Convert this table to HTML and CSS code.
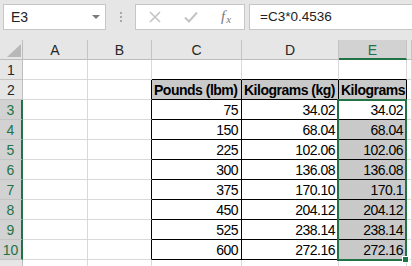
FILE: index.html
```html
<!DOCTYPE html>
<html>
<head>
<meta charset="utf-8">
<link rel="stylesheet" href="styles.css">
</head>
<body>
<div class="bar">
  <div class="namebox"><span class="nb-text">E3</span><svg class="nb-arrow" width="8" height="4" viewBox="0 0 8 4"><path d="M0 0H8L4 4Z" fill="#7a7a7a"/></svg></div>
  <div class="dots"><i></i><i></i><i></i></div>
  <div class="btns">
    <svg class="ico" width="12" height="12" viewBox="0 0 12 12"><path d="M1 1L11 11M11 1L1 11" stroke="#c4c4c4" stroke-width="1.6"/></svg>
    <svg class="ico" width="14" height="12" viewBox="0 0 14 12"><path d="M1 6.5L5 10.5L13 1.5" stroke="#c4c4c4" stroke-width="2" fill="none"/></svg>
    <span class="fx">f<span class="fx-x">x</span></span>
  </div>
  <div class="formula">=C3*0.4536</div>
</div>
<div class="sheet">
  <div class="c corner"><svg width="14" height="13" viewBox="0 0 14 13"><path d="M14 0V13H0Z" fill="#b8b8b8"/></svg></div>
  <div class="c h">A</div><div class="c h">B</div><div class="c h">C</div><div class="c h">D</div><div class="c h hsel">E</div><div class="c h"></div>

  <div class="c rh">1</div><div class="c"></div><div class="c"></div><div class="c tt"></div><div class="c tt"></div><div class="c tt"></div><div class="c"></div>

  <div class="c rh">2</div><div class="c"></div><div class="c bl"></div><div class="c tb th">Pounds (lbm)</div><div class="c tb th">Kilograms (kg)</div><div class="c tb th">Kilograms</div><div class="c"></div>

  <div class="c rh rsel">3</div><div class="c"></div><div class="c bl"></div><div class="c tb num">75</div><div class="c tb num">34.02</div><div class="c tb num">34.02</div><div class="c"></div>
  <div class="c rh rsel">4</div><div class="c"></div><div class="c bl"></div><div class="c tb num">150</div><div class="c tb num">68.04</div><div class="c tb num shade">68.04</div><div class="c"></div>
  <div class="c rh rsel">5</div><div class="c"></div><div class="c bl"></div><div class="c tb num">225</div><div class="c tb num">102.06</div><div class="c tb num shade">102.06</div><div class="c"></div>
  <div class="c rh rsel">6</div><div class="c"></div><div class="c bl"></div><div class="c tb num">300</div><div class="c tb num">136.08</div><div class="c tb num shade">136.08</div><div class="c"></div>
  <div class="c rh rsel">7</div><div class="c"></div><div class="c bl"></div><div class="c tb num">375</div><div class="c tb num">170.10</div><div class="c tb num shade">170.1</div><div class="c"></div>
  <div class="c rh rsel">8</div><div class="c"></div><div class="c bl"></div><div class="c tb num">450</div><div class="c tb num">204.12</div><div class="c tb num shade">204.12</div><div class="c"></div>
  <div class="c rh rsel">9</div><div class="c"></div><div class="c bl"></div><div class="c tb num">525</div><div class="c tb num">238.14</div><div class="c tb num shade">238.14</div><div class="c"></div>
  <div class="c rh rsel">10</div><div class="c"></div><div class="c bl"></div><div class="c tb num">600</div><div class="c tb num">272.16</div><div class="c tb num shade">272.16</div><div class="c"></div>

  <div class="c rh last"></div><div class="c last"></div><div class="c last"></div><div class="c last"></div><div class="c last"></div><div class="c last"></div><div class="c last"></div>

  <div class="selection"></div>
  <div class="handle"></div>
</div>
</body>
</html>
```

FILE: styles.css
```css
html, body {
  margin: 0;
  padding: 0;
}
body {
  width: 412px;
  height: 266px;
  overflow: hidden;
  background: #e6e6e6;
  font-family: "Liberation Sans", Arial, sans-serif;
}
.bar {
  height: 40px;
  display: flex;
  align-items: flex-start;
  padding-top: 4px;
  box-sizing: border-box;
  background: #e6e6e6;
}
.namebox {
  margin-left: 3px;
  width: 103px;
  height: 26px;
  box-sizing: border-box;
  background: #fff;
  border: 1px solid #c6c6c6;
  display: flex;
  align-items: center;
  justify-content: space-between;
  padding: 0 5px 0 7px;
  font-size: 14px;
  color: #222;
}
.nb-arrow {
  margin-top: -1px;
}
.dots {
  width: 29px;
  height: 26px;
  display: flex;
  flex-direction: column;
  align-items: center;
  justify-content: center;
  gap: 2px;
}
.dots i {
  display: block;
  width: 2px;
  height: 2px;
  background: #a8a8a8;
}
.btns {
  width: 110px;
  height: 26px;
  box-sizing: border-box;
  background: #fff;
  border: 1px solid #c6c6c6;
  display: flex;
  align-items: center;
  padding-left: 13px;
}
.btns .ico:nth-child(1) {
  margin-right: 23px;
}
.btns .ico:nth-child(2) {
  margin-right: 23px;
}
.fx {
  font-family: "Liberation Serif", "Times New Roman", serif;
  font-style: italic;
  font-size: 15px;
  color: #7a7a7a;
  margin-top: -2px;
}
.fx-x {
  font-size: 11px;
  position: relative;
  top: 2px;
  margin-left: 1px;
}
.formula {
  flex: 1;
  margin-left: 4px;
  margin-right: -2px;
  height: 26px;
  box-sizing: border-box;
  background: #fff;
  border: 1px solid #c6c6c6;
  padding-left: 10px;
  font-size: 13.5px;
  line-height: 24px;
  color: #222;
}
.sheet {
  position: relative;
  display: grid;
  grid-template-columns: 23px 65px 64px 90px 97px 68px 1fr;
  grid-template-rows: repeat(11, 20px) 6px;
  background: #fff;
}
.c {
  box-sizing: border-box;
  border-right: 1px solid #d9d9d9;
  border-bottom: 1px solid #d9d9d9;
  font-size: 14px;
  letter-spacing: -0.5px;
  color: #000;
  white-space: nowrap;
  overflow: hidden;
  display: flex;
  align-items: flex-end;
  padding-bottom: 1px;
}
.c.last {
  border-bottom: 0;
  padding: 0;
}
.corner {
  background: #e6e6e6;
  border-right-color: #bdbdbd;
  border-bottom-color: #bdbdbd;
  align-items: flex-end;
  justify-content: flex-end;
  padding: 0 1px 2px 0;
}
.h {
  background: #e6e6e6;
  border-right-color: #c4c4c4;
  border-bottom-color: #bdbdbd;
  justify-content: center;
  align-items: center;
  padding: 1px 0 0 0;
  letter-spacing: 0;
  color: #262626;
}
.hsel {
  background: #d2d2d2;
  color: #217346;
  border-bottom: 2px solid #217346;
}
.rh {
  background: #e6e6e6;
  border-right-color: #bdbdbd;
  border-bottom-color: #c4c4c4;
  justify-content: center;
  align-items: center;
  padding: 1px 0 0 0;
  letter-spacing: 0;
  color: #262626;
}
.rsel {
  background: #d2d2d2;
  color: #217346;
  border-right: 2px solid #217346;
  padding-right: 0;
}
.tt {
  border-bottom-color: #000;
}
.bl {
  border-right-color: #000;
}
.tb {
  border-right-color: #000;
  border-bottom-color: #000;
}
.th {
  background: #c9c9c9;
  font-weight: bold;
  padding-left: 2px;
}
.num {
  justify-content: flex-end;
  padding-right: 3px;
}
.shade {
  background: #c9c9c9;
}
.selection {
  position: absolute;
  left: 337px;
  top: 59px;
  width: 70px;
  height: 162px;
  box-sizing: border-box;
  border: 2px solid #217346;
  pointer-events: none;
}
.handle {
  position: absolute;
  left: 402px;
  top: 216px;
  width: 5px;
  height: 5px;
  background: #217346;
  border: 1px solid #fff;
}
```
